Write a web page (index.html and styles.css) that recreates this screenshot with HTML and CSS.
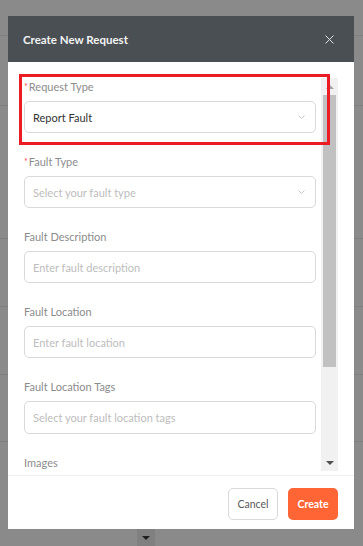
FILE: index.html
```html
<!DOCTYPE html>
<html lang="en">
<head>
    <meta charset="UTF-8">
    <meta name="viewport" content="width=device-width, initial-scale=1.0">
    <title>Create New Request</title>
    <link rel="stylesheet" href="styles.css">
</head>
<body>
    <!-- page behind the overlay -->
    <div class="page">
        <div class="page-row r1"></div>
        <div class="page-row r2"></div>
        <div class="page-row r3"></div>
        <div class="page-row r4"></div>
        <div class="page-row r5"></div>
        <div class="page-row r6"></div>
    </div>

    <div class="overlay">
        <div class="modal">
            <div class="modal-header">
                <span class="modal-title">Create New Request</span>
                <svg class="close" width="9" height="9" viewBox="0 0 9 9">
                    <path d="M0.5 0.5 L8.5 8.5 M8.5 0.5 L0.5 8.5" stroke="#dfe1e2" stroke-width="1" fill="none"/>
                </svg>
            </div>
            <div class="modal-body">
                <div class="scroll-area">
                    <div class="form">
                        <div class="field">
                            <label class="label"><span class="req">*</span>Request Type</label>
                            <div class="control">
                                <span class="value">Report Fault</span>
                                <svg class="chevron" width="7" height="4" viewBox="0 0 7 4"><path d="M0.5 0.5 L3.5 3.5 L6.5 0.5" stroke="#c8c8c8" fill="none"/></svg>
                            </div>
                        </div>
                        <div class="field">
                            <label class="label"><span class="req">*</span>Fault Type</label>
                            <div class="control">
                                <span class="placeholder">Select your fault type</span>
                                <svg class="chevron" width="7" height="4" viewBox="0 0 7 4"><path d="M0.5 0.5 L3.5 3.5 L6.5 0.5" stroke="#c8c8c8" fill="none"/></svg>
                            </div>
                        </div>
                        <div class="field">
                            <label class="label">Fault Description</label>
                            <div class="control"><span class="placeholder">Enter fault description</span></div>
                        </div>
                        <div class="field">
                            <label class="label">Fault Location</label>
                            <div class="control"><span class="placeholder">Enter fault location</span></div>
                        </div>
                        <div class="field">
                            <label class="label">Fault Location Tags</label>
                            <div class="control tall"><span class="placeholder">Select your fault location tags</span></div>
                        </div>
                        <div class="field">
                            <label class="label">Images</label>
                        </div>
                    </div>
                    <div class="scrollbar">
                        <div class="sb-btn"><span class="tri-up"></span></div>
                        <div class="sb-thumb"></div>
                        <div class="sb-space"></div>
                        <div class="sb-btn"><span class="tri-down"></span></div>
                    </div>
                </div>
                <div class="highlight"></div>
            </div>
            <div class="modal-footer">
                <button class="btn btn-cancel">Cancel</button>
                <button class="btn btn-create">Create</button>
            </div>
        </div>
        <div class="page-arrow"><span class="tri-down dark"></span></div>
    </div>
</body>
</html>
```

FILE: styles.css
```css
body {
    margin: 0;
    padding: 0;
    font-family: Lato, "Noto Sans", sans-serif;
    background: #8a8a8a;
    width: 363px;
    height: 546px;
    overflow: hidden;
    position: relative;
}
.page {
    display: flex;
    flex-direction: column;
}
.page-row {
    border-bottom: 1px solid #7f7f7f;
}
.r1 { height: 35px; }
.r2 { height: 69px; }
.r3 { height: 132px; }
.r4 { height: 67px; }
.r5 { height: 67px; }
.r6 { height: 66px; }
.overlay {
    position: absolute;
    left: 0;
    top: 0;
    right: 0;
    bottom: 0;
}
.modal {
    margin: 16px 0 0 8px;
    width: 346px;
    background: #fff;
    display: flex;
    flex-direction: column;
}
.modal-header {
    height: 46px;
    background: #4a4f53;
    display: flex;
    align-items: center;
    justify-content: space-between;
    padding: 0 20px 0 15px;
}
.modal-title {
    color: #f2f3f3;
    font-size: 11.5px;
    font-weight: bold;
}
.close {
    display: block;
}
.modal-body {
    position: relative;
    padding: 16px 16px 4px 16px;
    border-bottom: 1px solid #efefef;
}
.scroll-area {
    height: 393px;
    display: flex;
    gap: 5px;
    overflow: hidden;
}
.form {
    flex: 1;
}
.field {
    margin-bottom: 20px;
}
.label {
    display: block;
    height: 18px;
    line-height: 18px;
    margin-bottom: 5px;
    font-size: 11px;
    color: #8c8c8c;
}
.req {
    color: #ff4d4f;
    font-size: 9px;
    margin-right: 1px;
    vertical-align: 1px;
}
.control {
    height: 30px;
    border: 1px solid #d9d9d9;
    border-radius: 5px;
    display: flex;
    align-items: center;
    justify-content: space-between;
    padding: 0 10px 0 8px;
    font-size: 11px;
}
.control.tall {
    height: 31px;
}
.value {
    color: #333;
}
.placeholder {
    color: #bdbdbd;
}
.chevron {
    display: block;
}
.scrollbar {
    width: 17px;
    flex: none;
    background: #f1f1f1;
    display: flex;
    flex-direction: column;
}
.sb-btn {
    height: 17px;
    display: flex;
    align-items: center;
    justify-content: center;
}
.sb-thumb {
    height: 272px;
    margin: 0 2px;
    background: #c1c1c1;
}
.sb-space {
    flex: 1;
}
.tri-up {
    width: 0;
    height: 0;
    border-left: 4px solid transparent;
    border-right: 4px solid transparent;
    border-bottom: 4px solid #a3a3a3;
}
.tri-down {
    width: 0;
    height: 0;
    border-left: 4px solid transparent;
    border-right: 4px solid transparent;
    border-top: 4px solid #505050;
}
.highlight {
    position: absolute;
    left: 11px;
    top: 12px;
    width: 305px;
    height: 65px;
    border: 3px solid #ec1c24;
}
.modal-footer {
    height: 53px;
    padding: 12px 16px 0 0;
    box-sizing: border-box;
    display: flex;
    justify-content: flex-end;
    align-items: flex-start;
    gap: 10px;
}
.btn {
    width: 50px;
    height: 32px;
    border-radius: 5px;
    font-family: Lato, "Noto Sans", sans-serif;
    font-size: 10.5px;
    padding: 0;
    cursor: pointer;
}
.btn-cancel {
    background: #fff;
    border: 1px solid #d9d9d9;
    color: #595959;
}
.btn-create {
    background: #ff6535;
    border: none;
    color: #fff;
    font-weight: bold;
}
.page-arrow {
    position: absolute;
    left: 137px;
    top: 529px;
    width: 18px;
    height: 17px;
    background: #808080;
    display: flex;
    align-items: center;
    justify-content: center;
}
.tri-down.dark {
    border-top-color: #1e1e1e;
}
```
